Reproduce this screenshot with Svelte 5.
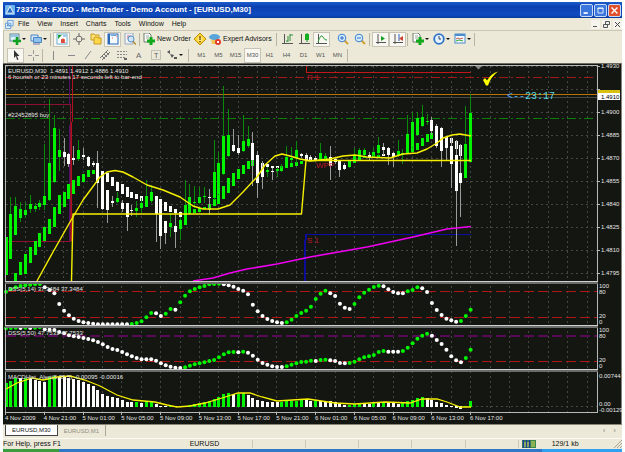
<script>
  const menus = ["File", "View", "Insert", "Charts", "Tools", "Window", "Help"];
  const periods = ["M1", "M5", "M15", "M30", "H1", "H4", "D1", "W1", "MN"];
  const lineTools = ["vline", "hline", "trend", "channel", "fibo", "text", "label"];

  let period = "M30";
  let activeTab = "EURUSD,M30";

  const barX = (i) => 6 + i * 4.84;

  // high, body top, body bottom, low, up (1) or down (0)
  const candles = [
    [237,237,275,275,1],[197,214,259,259,1],[197,206,235,235,1],[202,209,218,222,1],[203,210,215,218,1],
    [195,204,209,213,1],[203,206,209,212,1],[200,203,207,210,1],[144,196,205,210,1],[99,163,200,201,1],
    [115,128,182,183,1],[129,150,157,171,1],[138,152,157,166,0],[153,154,164,167,0],[146,158,160,165,0],
    [140,150,159,161,1],[148,155,157,160,0],[156,157,166,167,0],[161,163,165,167,0],[151,163,183,208,0],
    [171,171,209,210,0],[190,190,210,223,0],[196,201,203,207,0],[192,198,202,203,1],[200,203,209,212,0],
    [203,203,217,231,0],[205,210,211,216,0],[201,208,211,217,1],[198,203,208,213,1],[180,196,207,207,1],
    [185,192,201,203,1],[196,196,214,242,0],[199,199,236,249,0],[221,221,233,244,0],[213,223,227,237,1],
    [213,226,232,248,0],[217,220,229,240,1],[180,205,225,225,1],[184,197,214,214,1],[186,202,203,208,1],
    [187,197,203,204,1],[187,196,197,203,1],[189,197,198,215,0],[140,172,198,200,1],[152,163,194,195,1],
    [86,136,174,175,1],[109,135,156,157,1],[129,145,151,152,0],[135,148,153,155,0],[115,141,151,152,1],
    [126,139,146,148,1],[132,143,160,186,0],[151,155,183,198,0],[161,167,177,189,0],[167,170,172,177,1],
    [168,171,172,180,0],[167,169,171,177,1],[164,168,171,172,1],[146,157,168,168,1],[147,158,160,163,1],
    [141,150,158,163,1],[153,154,156,158,0],[153,155,158,159,0],[155,157,159,161,0],[156,158,160,161,0],
    [143,153,160,161,1],[153,156,158,160,1],[146,157,166,180,0],[158,159,162,164,0],[160,161,170,177,0],
    [163,165,169,170,0],[160,161,167,168,1],[148,155,163,163,1],[148,150,160,160,1],[148,150,155,158,1],
    [152,155,158,160,0],[148,152,155,158,1],[137,145,153,156,1],[143,147,150,155,0],[147,148,155,165,0],
    [152,153,157,167,0],[140,151,155,157,1],[149,153,155,164,1],[115,134,153,154,1],[112,122,147,148,1],
    [112,118,135,136,1],[105,117,126,127,1],[114,121,122,125,1],[117,120,131,135,0],[124,126,146,148,0],
    [127,128,151,167,0],[136,138,148,160,0],[138,146,164,188,0],[140,155,191,246,0],[144,173,183,217,0],
    [106,144,178,178,1],[94,113,162,162,1],
  ];

  // smoothed bars: index, top, bottom, up
  const smooth = [
    [2,273,281,1],[3,262,275,1],[4,254,274,1],[5,247,263,1],[6,241,255,1],[7,233,247,1],[8,227,241,1],
    [9,219,234,1],[10,207,227,1],[11,195,214,1],[12,192,207,1],[13,184,199,1],[14,180,194,1],[15,176,186,1],
    [16,174,182,1],[17,170,177,1],[18,170,174,1],[19,170,172,1],[20,171,176,0],[21,173,182,0],[22,177,186,0],
    [23,182,191,0],[24,184,194,0],[25,187,197,0],[26,192,198,0],[27,194,199,0],[28,196,201,0],[29,198,200,0],
    [31,196,203,0],[32,200,207,0],[33,202,211,0],[34,206,212,0],[35,209,213,0],[36,212,217,0],[37,212,215,1],
    [38,211,214,1],[39,209,213,1],[40,208,212,1],[41,207,209,1],[42,204,210,1],[43,199,206,1],[44,194,204,1],
    [45,186,199,1],[46,178,193,1],[47,173,186,1],[48,169,179,1],[49,165,174,1],[50,161,169,1],[51,160,166,1],
    [52,161,166,0],[53,163,167,0],[54,164,167,0],[55,166,168,0],[56,166,168,0],[57,166,169,1],[58,165,168,1],
    [59,163,167,1],[60,162,166,1],[61,161,164,1],[62,157,160,0],[63,157,160,0],[64,158,160,0],[65,158,160,1],
    [66,157,160,1],[67,157,159,0],[72,156,159,1],[73,156,159,1],[74,156,158,1],[76,155,158,1],[77,155,158,1],
    [78,154,156,0],[82,153,155,1],[83,151,154,1],[84,145,152,1],[85,143,150,1],[86,138,146,1],[87,134,142,1],
    [88,133,139,1],[89,135,137,1],[90,135,139,0],[91,137,141,0],[92,138,143,0],[93,141,149,0],[94,145,156,0],
    [95,150,156,0],[96,147,160,1],
  ];

  // indicator values, in thirds of a unit below y = 280
  const dss14 = [
    35,28,22,18,16,14,13,12,22,30,40,72,92,106,116,123,127,129,131,133,133,133,133,133,133,133,132,129,124,112,
    99,100,108,101,87,89,67,47,34,27,22,18,13,12,11,13,16,20,27,32,43,74,94,108,117,123,127,129,127,119,
    108,99,92,80,57,41,32,40,48,71,83,87,72,52,38,29,21,17,19,28,36,40,40,34,30,22,25,36,69,90,
    105,116,121,125,123,108,89,
  ];
  const dss50 = [
    145,144,143,144,143,144,143,142,148,149,150,156,160,166,169,171,174,177,181,186,193,201,207,210,216,223,229,234,238,238,
    238,242,250,256,260,263,264,262,257,253,250,247,243,240,232,223,217,216,217,215,218,227,239,249,254,259,261,261,259,254,
    250,246,245,242,243,240,239,241,243,249,250,249,245,238,232,229,225,216,213,215,215,215,213,203,190,176,167,161,167,180,
    192,209,229,241,247,234,209,
  ];
  const macd = [
    310,303,293,295,294,295,300,303,305,290,287,292,292,293,297,300,307,311,317,330,342,349,351,355,360,365,367,366,368,364,
    363,373,383,383,382,385,380,377,374,372,369,367,364,358,352,342,340,342,341,340,346,354,360,364,366,367,367,366,364,363,
    362,360,361,362,361,364,364,364,366,373,376,374,373,370,371,372,369,369,368,370,370,371,368,364,360,353,352,355,360,366,
    370,375,379,388,391,384,364,
  ];
  const rising = (list, i) => i === 0 || list[i] < list[i - 1];
  const indY = (v) => 280 + v / 3;

  const prices = ["1.4930","","1.4900","1.4885","1.4870","1.4855","1.4840","1.4825","1.4810","1.4795"];
  const times = [
    "4 Nov 2009","4 Nov 21:00","5 Nov 01:00","5 Nov 05:00","5 Nov 09:00","5 Nov 13:00","5 Nov 17:00",
    "5 Nov 21:00","6 Nov 01:00","6 Nov 05:00","6 Nov 09:00","6 Nov 13:00","6 Nov 17:00",
  ];
  const gridX = Array.from({ length: 30 }, (_, i) => 25 + i * 19.38);
  const scale = [[288,"100"],[294,"80"],[318,"20"],[324,"0"],[332,"100"],[338,"80"],[362,"20"],[368,"0"],[378,"0.00744"],[406,"0.00"],[412,"-0.00129"]];
</script>

{#snippet icon(name)}
  <svg class="icon" viewBox="0 0 12 12" aria-hidden="true">
    {#if name === "newchart"}
      <rect x="1" y="1" width="9" height="7" fill="#dff0f8" stroke="#5f8a9a" />
      <path d="M2 3h7" stroke="#4a9ad0" />
      <path d="M8 4v8M4 8h8" stroke="#10a020" stroke-width="2.6" />
    {:else if name === "profiles"}
      <path d="M1 2h7v6H1z" fill="#d4e8fa" stroke="#4a86c4" />
      <path d="M3.5 4.500h8v5h-8z" fill="#8fc0ee" stroke="#4a86c4" />
      <path d="M3 11h7" stroke="#77a" />
    {:else if name === "watch"}
      <rect x="1" y="1" width="10" height="10" fill="#fff" stroke="#6ab0d0" />
      <path d="M2 6V2h4z" fill="#18a030" /><path d="M5 6l5 4H5z" fill="#e0483c" /><circle cx="7" cy="7.500" r="2" fill="#e0483c" /><path d="M7 3h3" stroke="#4a8fd0" />
    {:else if name === "target"}
      <circle cx="6" cy="6" r="3" fill="none" stroke="#777" /><path d="M6 0v4M6 8v4M0 6h4M8 6h4" stroke="#666" />
    {:else if name === "folder"}
      <path d="M1 1h3l1 1h4v5H1z" fill="#ffe270" stroke="#c89a20" />
      <path d="M4 5l1-1h2l1 1h3v6H4z" fill="#ffd84a" stroke="#c89a20" />
    {:else if name === "terminal"}
      <rect x="1" y="1" width="10" height="10" fill="#f4faff" stroke="#2868b8" /><path d="M2 1v10" stroke="#2868b8" stroke-width="2" /><path d="M4 2.500h5" stroke="#6aa4e0" /><path d="M9 3h1M5 5h1" stroke="#e07050" />
    {:else if name === "tester"}
      <path d="M1 0h8v11H1z" fill="#edf2f7" stroke="#9ab" /><path d="M3 3h4M3 5h2" stroke="#d67" />
      <circle cx="7" cy="6" r="3" fill="#cfe6fa" stroke="#5a90c8" /><path d="M9 8.500l3 3" stroke="#b08a30" stroke-width="1.500" />
    {:else if name === "order" || name === "indicators"}
      <path d="M1 0h5l2 2v7H1z" fill="#fff" stroke="#6c7c6c" /><path d="M3 3h3M3 5h3" stroke="#9a9" />
      <path d="M8 4v8M4 8h8" stroke="#12a81c" stroke-width="3" />
    {:else if name === "alert"}
      <path d="M6 0l6 6-6 6-6-6z" fill="#ffd52e" stroke="#b98e10" /><circle cx="6" cy="6" r="2.500" fill="#ffe98a" /><path d="M6 3v4M6 8v1.500" stroke="#77560a" stroke-width="1.400" />
    {:else if name === "expert"}
      <path d="M2 6h7v5H3z" fill="#f2c64e" /><ellipse cx="5.500" cy="4" rx="5.500" ry="3" fill="#58a5dc" />
      <circle cx="9" cy="9" r="3" fill="#e2392a" /><path d="M8 8h2v2H8z" fill="#fff" />
    {:else if name === "bars"}
      <path d="M2.500 1v10M0 10.500h11" stroke="#555" /><path d="M6 3v6M8 1v7M8 2h3M6 8H4" stroke="#2b8f3a" />
    {:else if name === "candles"}
      <path d="M2.500 1v10M0 10.500h11" stroke="#555" /><path d="M8 0v9" stroke="#128a20" /><rect x="6" y="1" width="4" height="6" fill="#14b024" />
    {:else if name === "line"}
      <path d="M2.500 1v10M0 10.500h11" stroke="#555" /><path d="M2 9Q5 0 7 4T11 7" fill="none" stroke="#2b9f3a" />
    {:else if name === "zoomin" || name === "zoomout"}
      <path d="M7 7l4 4" stroke="#d0a030" stroke-width="2" /><circle cx="5" cy="5" r="3.800" fill="#d8eeff" stroke="#3a80d0" />
      <path d="M3 5h4" stroke="#2868c8" />{#if name === "zoomin"}<path d="M5 3v4" stroke="#2868c8" />{/if}
    {:else if name === "scroll" || name === "shift"}
      <path d="M3 1v10M1 9.500h10" stroke="#555" />
      {#if name === "scroll"}<path d="M6 3l4 2.500-4 2.500z" fill="#15a025" />{:else}<path d="M7 1v7" stroke="#2868c8" /><path d="M11 3v5L7 5.500z" fill="#d04030" />{/if}
    {:else if name === "clock"}
      <circle cx="6" cy="6" r="4.800" fill="#e4f2ff" stroke="#2f74c8" stroke-width="1.800" /><path d="M6 3v3h2" fill="none" stroke="#345" />
    {:else if name === "template"}
      <rect x="1" y="1" width="10" height="9" fill="#f4faff" stroke="#4a8ccc" /><path d="M1 2h10" stroke="#4a8ccc" stroke-width="2" /><path d="M2 6l2-1 2 1 3-1" fill="none" stroke="#c55" /><path d="M2 8l3-1 4 1" fill="none" stroke="#3a3" />
    {:else if name === "cursor"}
      <path d="M4 1v8l2-2 1 4 1.500-.5L7 7h2.500z" fill="#333" />
    {:else if name === "cross"}
      <path d="M6.500 1v4M6.500 8v4M1 6.500h4M8 6.500h4" stroke="#999" />
    {:else if name === "vline"}
      <path d="M5.500 2v9" stroke="#888" />
    {:else if name === "hline"}
      <path d="M3 6.500h7" stroke="#888" />
    {:else if name === "trend"}
      <path d="M3 10l6-8" stroke="#888" />
    {:else if name === "channel"}
      <path d="M1 9l8-8M3 11l8-8M3 7l3 3M5 5l3 3M7 3l3 3" stroke="#777" />
    {:else if name === "fibo"}
      <path d="M1 2.500h10M1 5.500h10M1 8.500h8" stroke="#888" stroke-dasharray="2 1" /><path d="M8 10h3" stroke="#666" stroke-width="2" />
    {:else if name === "text"}
      <text x="3" y="9" font-size="8" fill="#666">A</text>
    {:else if name === "label"}
      <rect x="1.500" y="1.500" width="9" height="9" fill="none" stroke="#999" stroke-dasharray="1 1" /><text x="4" y="9" font-size="7" fill="#555">T</text>
    {:else if name === "arrows"}
      <path d="M1 3l3-2v4zM4 5l4 1-2 3z" fill="#555" /><path d="M8 9h3" stroke="#555" stroke-width="2" />
    {/if}
  </svg>
{/snippet}

{#snippet tool(name, pressed = false, drop = false)}
  <button class="tool" class:pressed class:drop aria-label={name}>
    {@render icon(name)}
    {#if drop}<span class="caret"></span>{/if}
  </button>
{/snippet}

<div class="window">
  <header class="titlebar">
    <svg class="logo" viewBox="0 0 11 11" aria-hidden="true">
      <rect width="11" height="11" rx="1" fill="#6db4ee" />
      <path d="M5.500 1.500l4 7.500h-8z" fill="#2a6cc4" stroke="#fff" />
    </svg>
    <h1>7337724: FXDD - MetaTrader - Demo Account - [EURUSD,M30]</h1>
    <div class="controls">
      <button aria-label="Minimize"><svg viewBox="0 0 13 13"><path d="M3 9.500h5" stroke="#fff" stroke-width="2" /></svg></button>
      <button aria-label="Maximize"><svg viewBox="0 0 13 13"><path d="M3.500 3.500h6v6h-6z M3 4h7" fill="none" stroke="#fff" /></svg></button>
      <button class="close" aria-label="Close"><svg viewBox="0 0 13 13"><path d="M3 3l7 7M10 3l-7 7" stroke="#fff" stroke-width="1.600" /></svg></button>
    </div>
  </header>

  <nav class="menubar">
    <svg class="doc" viewBox="0 0 10 10" aria-hidden="true"><path d="M3 .5h6v6H3z M.5 3.500h6v6h-6z" fill="#e4f1fc" stroke="#5b9bd5" /><path d="M2 7l2-2 2 2" fill="none" stroke="#3a78b8" /></svg>
    {#each menus as item}
      <button class="menu">{item}</button>
    {/each}
    <div class="mdi">
      <button aria-label="Minimize chart"><svg viewBox="0 0 9 9"><path d="M2 6.500h4" stroke="#555" /></svg></button>
      <button aria-label="Restore chart"><svg viewBox="0 0 9 9"><path d="M3.500 1.500h4v3h-4zM1.500 4.500h4v3h-4z" fill="#eee" stroke="#555" /></svg></button>
      <button aria-label="Close chart"><svg viewBox="0 0 9 9"><path d="M2 2l5 5M7 2L2 7" stroke="#444" /></svg></button>
    </div>
  </nav>

  <div class="toolbar">
    {@render tool("newchart", false, true)}
    {@render tool("profiles", false, true)}
    <span class="sep"></span>
    {@render tool("watch", true)}
    {@render tool("target")}
    {@render tool("folder")}
    {@render tool("terminal", true)}
    {@render tool("tester")}
    <span class="sep"></span>
    <button class="tool wide order">{@render icon("order")}New Order</button>
    {@render tool("alert")}
    <button class="tool wide expert">{@render icon("expert")}Expert Advisors</button>
    <span class="sep"></span>
    {@render tool("bars")}
    {@render tool("candles")}
    {@render tool("line", true)}
    <span class="sep blank"></span>
    {@render tool("zoomin")}
    {@render tool("zoomout")}
    <span class="sep"></span>
    {@render tool("scroll", true)}
    {@render tool("shift", true)}
    <span class="sep"></span>
    {@render tool("indicators", false, true)}
    {@render tool("clock", false, true)}
    {@render tool("template", false, true)}
    <span class="sep"></span>
  </div>

  <div class="toolbar">
    {@render tool("cursor", true)}
    {@render tool("cross")}
    <span class="sep"></span>
    {#each lineTools as name}
      {@render tool(name)}
    {/each}
    {@render tool("arrows", false, true)}
    <span class="sep group"></span>
    {#each periods as p}
      <button class="tool period" class:pressed={p === period} on:click={() => (period = p)}>{p}</button>
    {/each}
    <span class="sep"></span>
  </div>

  <main>
    <svg class="chart" viewBox="3 63 619 361" role="img" aria-label="EURUSD M30 chart">
      <rect x="3" y="63" width="619" height="361" fill="#141612" />
      <path d="M3 63.500H622" stroke="#6b6b66" />
      <path d="M621.500 63V424" stroke="#85837c" />

      <!-- grid -->
      <g stroke="#454743" stroke-dasharray="2 3" class="crisp">
        {#each gridX as x}
          <path d="M{x} 66V412" />
        {/each}
        {#each prices as _, i}
          <path d="M6 {66.5 + i * 23}H597" />
        {/each}
        <path d="M6 406.500H597" />
      </g>

      <!-- levels -->
      <g class="crisp" fill="none">
        <path d="M6 77.500H594" stroke="#a01818" stroke-dasharray="9 3 2 3" />
        <path d="M6 118.500H594" stroke="#088008" stroke-dasharray="9 3 2 3" />
        <path d="M6 97.500H597" stroke="#484a48" />
        <path d="M6 94.500H597" stroke="#b87408" />
        <path d="M6 104.500H70V241.500H6" stroke="#8c1030" />
        <path d="M69.500 66V104M69.500 125V241" stroke="#50106a" />
        <path d="M72.500 66V115L71.500 130V241" stroke="#b01020" />
        <path d="M306.500 66V72.500H471" stroke="#c01818" />
        <path d="M304.500 281V250L306 234.500" stroke="#0c0c98" stroke-width="2" />
        <path d="M306 234.500H471" stroke="#0c0ca8" />
        <path d="M6 291.500H597M6 317.500H597M6 361.500H597" stroke="#b01616" stroke-dasharray="10 4" />
        <path d="M6 336H597" stroke="#580a54" stroke-width="2" stroke-dasharray="10 4" />
      </g>

      <!-- price bars -->
      <g class="crisp">
        {#each smooth as [i, top, bottom, up]}
          <rect x={barX(i) - 1.5} y={top} width="3" height={bottom - top} fill={up ? "#00f400" : "#fff"} />
        {/each}
        {#each candles as [high, top, bottom, low, up], i}
          <path d="M{barX(i)} {high}V{low}" stroke={up ? "#0a8a0a" : "#9a9a9a"} />
          <rect x={barX(i) - 1.5} y={top} width="3" height={bottom - top} fill={up ? "#00f400" : "#fff"} />
        {/each}
      </g>

      <g fill="none" stroke-width="1.400" stroke-linejoin="round">
        <path stroke="#f6f000" d="M37 281L53 252L70 222L83 200L100 177L107 172L115 170.500L123 172L133 177L147 185L163 190L180 197L193 206L203 209L218 209L230 205L243 192L257 177L265 165L275 156L282 154L290 156L300 159L310 161L320 160L330 159L343 156L355 155L367 157L390 158L403 154L417 153L427 149L437 143L443 138L452 135L460 134L471 136" />
        <path stroke="#f6f000" d="M71.500 281L73 214H301.500L306 160.500H471" />
        <path stroke="#f000f0" stroke-width="1.600" d="M193 281L213 278L230 273L247 269L277 264L310 257L367 247L413 237L447 229L471 226.500" />
      </g>

      <path d="M475 66h7l-3.500 3.500z" fill="#888" />
      <path d="M483 80l2-2 2 2.500q4-7 11-9-7 5-10 14h-2z" fill="#ffff00" />

      <!-- indicators -->
      {#each dss14 as v, i}
        <circle cx={barX(i)} cy={indY(v)} r="2" fill={rising(dss14, i) ? "#00f400" : "#fff"} />
      {/each}
      {#each dss50 as v, i}
        <circle cx={barX(i)} cy={indY(v)} r="2" fill={rising(dss50, i) ? "#00f400" : "#fff"} />
      {/each}
      <g class="crisp">
        {#each macd as v, i}
          <rect x={barX(i) - 1.5} y={Math.min(indY(v), 406)} width="3" height={Math.max(1, Math.abs(407 - indY(v)))} fill={rising(macd, i) ? "#00f400" : "#fff"} />
        {/each}
      </g>
      <path fill="none" stroke="#f6f000" stroke-width="1.300" d="M6 389L17 383L32 378L43 380L57 377L70 376L85 380L100 386L117 395L133 400L155 402L167 405L177 407L190 406L205 403L222 398L238 393L250 393L262 397L277 401L308 399L335 403L355 404L385 402L410 403L422 399L437 399L447 402L460 407H471" />

      <!-- frames -->
      <g class="crisp" fill="none" stroke="#b8b8b8">
        <path d="M5.500 412V65.500H597.500V412.500H5.500" />
        <path d="M5 281.500H598M5 325.500H598M5 369.500H598" stroke="#d0d0d0" />
        <path d="M5 283H598M5 327H598M5 371H598" stroke="#6c6c6c" stroke-width="2" />
        {#each prices as _, i}
          <path d="M597 {66.5 + i * 23}h3" />
        {/each}
        {#each times as _, i}
          <path d="M{5.6 + i * 38.76} 412v3" />
        {/each}
      </g>

      <g class="labels">
        <text x="8" y="73">EURUSD,M30&nbsp; 1.4891 1.4912 1.4886 1.4910</text>
        <text x="8" y="79">6 hourish or 23 minutes 17 seconds left to bar-end</text>
        <text x="8" y="117">#22452895 buy</text>
        <text x="8" y="291">DSS(5,14) 37.3484 37.3484</text>
        <text x="8" y="335">DSS(5,50) 47.7533 47.7533</text>
        <text x="8" y="379">MACDHist_Alert(5,35,5) -0.00095 -0.00016</text>
        {#each prices as price, i}
          <text x="601" y={68 + i * 23}>{price}</text>
        {/each}
        {#each scale as [y, label]}
          <text x="599" {y}>{label}</text>
        {/each}
        {#each times as time, i}
          <text x={5 + i * 38.76} y="420">{time}</text>
        {/each}
      </g>
      <rect x="598" y="90" width="22" height="4" fill="#d8c010" />
      <rect x="598" y="93" width="22" height="7" fill="#fff" />
      <text x="601" y="99" class="current">1.4910</text>

      <g class="pivots">
        <text x="307" y="80">R 1</text>
        <text x="316" y="168">WPP</text>
        <text x="307" y="243">S 1</text>
      </g>
      <text x="507" y="99" class="countdown"><tspan fill="#4aa8f4">&lt;--</tspan>23:17</text>
    </svg>
  </main>

  <div class="tabs">
    <button class:active={activeTab === "EURUSD,M30"} on:click={() => (activeTab = "EURUSD,M30")}>EURUSD,M30</button>
    <button class:active={activeTab === "EURUSD,M1"} on:click={() => (activeTab = "EURUSD,M1")}>EURUSD,M1</button>
    <span class="scrollers"><button aria-label="Previous tab">‹</button><button aria-label="Next tab">›</button></span>
  </div>

  <footer class="status">
    <span class="help">For Help, press F1</span>
    <span class="symbol">EURUSD</span>
    <span class="cell"></span>
    <span class="cell"></span>
    <span class="cell"></span>
    <span class="cell"></span>
    <span class="cell"></span>
    <span class="traffic">
      <svg viewBox="0 0 14 8" aria-hidden="true">
        <rect width="14" height="8" fill="#3a8a4a" />
        <path d="M1.500 0v8M4.500 0v8M7.500 0v8" stroke="#1e3f9a" stroke-width="1.500" /><path d="M10 1v6M12 1v6M3 2v5M6 2v5" stroke="#e0d860" />
      </svg>
      129/1 kb
    </span>
    <svg class="grip" viewBox="0 0 8 8" aria-hidden="true"><path d="M0 8l8-8M3 8l5-5M6 8l2-2" stroke="#a8a494" /></svg>
  </footer>
</div>
<div class="taskbar"></div>

<style>
  :global(body) {
    background: #fff;
    font-family: "Liberation Sans", Arial, sans-serif;
  }

  .window {
    margin: 0 3px;
    padding-top: 2px;
    font-size: 7px;
    line-height: 8px;
    color: #111;
  }

  button {
    padding: 0;
    border: 0;
    background: none;
    font: inherit;
    color: inherit;
    white-space: nowrap;
  }

  .titlebar {
    display: flex;
    align-items: center;
    height: 16px;
    padding: 0 1px 0 2px;
    background: linear-gradient(#1c5ccc, #0c40b0 30%, #104cc0 80%, #0a3a9c);
    color: #fff;
  }

  .logo {
    width: 10px;
    height: 10px;
  }

  h1 {
    flex: 1;
    margin: 0 0 0 1px;
    font-size: 8px;
    line-height: 10px;
    font-weight: bold;
    white-space: nowrap;
  }

  .controls {
    display: flex;
    gap: 1px;
  }

  .controls button {
    width: 13px;
    height: 13px;
    border: 1px solid #c8dcf8;
    border-radius: 2px;
    background: #3a76dc;
  }

  .controls svg {
    display: block;
    width: 100%;
  }

  .controls .close {
    background: #e0502c;
  }

  .menubar {
    display: flex;
    align-items: center;
    height: 12px;
    padding: 0 0 0 2px;
    background: #ece9d8;
    border-bottom: 1px solid #cbc7b6;
  }

  .doc {
    width: 9px;
    height: 9px;
  }

  .menu {
    padding: 0 4px;
  }

  .menu:hover {
    background: #316ac5;
    color: #fff;
  }

  .mdi {
    display: flex;
    gap: 2px;
    margin-left: auto;
  }

  .mdi button {
    width: 9px;
    height: 9px;
    background: #f6f4ec;
  }

  .mdi svg {
    display: block;
  }

  .toolbar {
    display: flex;
    align-items: center;
    height: 16px;
    padding-left: 3px;
    background: #ece9d8;
    border-left: 1px solid #c4c0b0;
  }

  .tool {
    display: flex;
    align-items: center;
    justify-content: center;
    flex: none;
    width: 17px;
    height: 15px;
  }

  .tool.drop {
    width: 21px;
    gap: 1px;
  }

  .tool.pressed {
    background: #f8f7f2;
    box-shadow: inset 0 0 0 1px #c9c5b6;
  }

  .tool.wide {
    justify-content: flex-start;
    gap: 2px;
    padding-left: 1px;
  }

  .tool.order {
    width: 49px;
  }

  .tool.expert {
    width: 67px;
  }

  .tool.period {
    font-size: 6px;
    color: #555;
  }

  .icon {
    width: 12px;
    height: 12px;
    flex: none;
  }

  .caret {
    border: 2px solid transparent;
    border-top-color: #111;
    border-bottom: 0;
  }

  .sep {
    flex: none;
    width: 1px;
    height: 13px;
    margin: 0 2px 0 1px;
    background: #bab6a6;
  }

  .sep.blank {
    background: none;
  }

  .sep.group {
    margin: 0 4px 0 3px;
  }

  .chart {
    display: block;
    width: 100%;
  }

  .crisp {
    shape-rendering: crispEdges;
  }

  .labels {
    font-size: 6px;
    fill: #e4e4e4;
  }

  .current {
    font-size: 6px;
    fill: #000;
  }

  .pivots {
    font-size: 8px;
    fill: #b81828;
  }

  .countdown {
    font-family: "Liberation Mono", "Courier New", monospace;
    font-size: 10px;
    fill: #58dce4;
  }

  .tabs {
    display: flex;
    align-items: flex-start;
    height: 13px;
    padding: 0 2px;
    background: #ece9d8;
    border-top: 1px solid #8a877a;
    font-size: 6px;
  }

  .tabs button {
    height: 11px;
    padding: 0 6px;
    color: #8f8c80;
    border-right: 1px solid #aaa697;
  }

  .tabs button.active {
    background: #fff;
    color: #111;
    border: 1px solid #444;
    border-top: 0;
  }

  .scrollers {
    margin-left: auto;
  }

  .tabs .scrollers button {
    padding: 0 4px;
    border: 0;
    font-size: 8px;
  }

  .status {
    display: flex;
    align-items: center;
    height: 10px;
    background: #ece9d8;
    border-top: 1px solid #fbfaf4;
  }

  .help {
    flex: 186;
  }

  .symbol {
    flex: 62;
  }

  .cell {
    flex: 52;
    height: 8px;
    border-left: 1px solid #cdc9b8;
  }

  .traffic {
    flex: 92;
    display: flex;
    align-items: center;
    gap: 16px;
    padding-left: 3px;
    border-left: 1px solid #cdc9b8;
  }

  .traffic svg {
    width: 14px;
    height: 8px;
  }

  .grip {
    width: 8px;
    height: 8px;
  }

  .taskbar {
    height: 3px;
    margin: 0 3px;
    background: linear-gradient(90deg, #3c9c40 9%, #2f78c8 9%, #2f78c8 87%, #30a0f0 87%);
  }
</style>
